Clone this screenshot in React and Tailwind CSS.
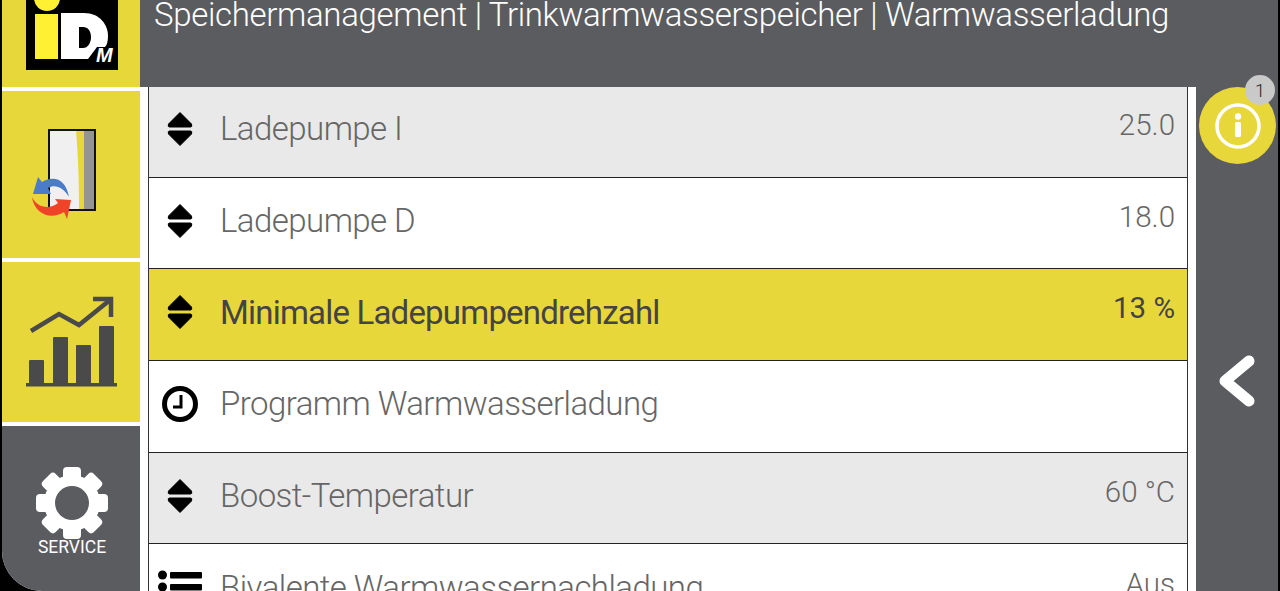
const font = {fontFamily: '"Roboto", "Liberation Sans", sans-serif'}

function SortIcon() {
    return (
        <svg width="26" height="34" viewBox="0 0 26 34" fill="#000">
            <path d="M13 0.5 L24.5 12 Q25.5 15 23.5 15 L2.5 15 Q0.5 15 1.5 12 Z" stroke="#000" strokeLinejoin="round"/>
            <path d="M13 33.5 L24.5 22 Q25.5 19 23.5 19 L2.5 19 Q0.5 19 1.5 22 Z" stroke="#000" strokeLinejoin="round"/>
        </svg>
    )
}

function ClockIcon() {
    return (
        <svg width="38" height="38" viewBox="0 0 38 38" fill="none" stroke="#000">
            <circle cx="19" cy="19" r="15.5" strokeWidth="5"/>
            <path d="M20 10 V22 H12" strokeWidth="3"/>
        </svg>
    )
}

function ListIcon() {
    return (
        <svg width="44" height="36" viewBox="0 0 44 36" fill="#000">
            <circle cx="4.5" cy="6" r="4.5"/>
            <circle cx="4.5" cy="18" r="4.5"/>
            <circle cx="4.5" cy="30" r="4.5"/>
            <rect x="12" y="3" width="32" height="6.5" rx="1"/>
            <rect x="12" y="15" width="32" height="6.5" rx="1"/>
            <rect x="12" y="27" width="32" height="6.5" rx="1"/>
        </svg>
    )
}

function Logo() {
    return (
        <svg width="92" height="71" viewBox="0 0 92 71" className="mx-auto">
            <rect x="0" y="0" width="92" height="70" fill="#000"/>
            <circle cx="21" cy="-2" r="13" fill="#fff033"/>
            <rect x="9" y="14" width="23" height="45" fill="#fff033"/>
            <path fillRule="evenodd" d="M35 13 H58 C74 13 82 25 82 36 C82 41 81 45 79 47 L71 47 L62 59 H35 Z M53 27 V48 H57 C62 48 65 43 65 37 C65 31 62 27 57 27 Z" fill="#fff"/>
            <text x="70" y="62" fontSize="20" fontWeight="700" fontStyle="italic" fill="#fff" style={{fontFamily: '"Liberation Sans", sans-serif'}}>M</text>
        </svg>
    )
}

function TankIcon() {
    return (
        <svg width="84" height="96" viewBox="0 0 84 96" className="ml-[2px] mt-[4px]">
            <rect x="19" y="1" width="46" height="80" fill="#f0f0f0" stroke="#111" strokeWidth="2"/>
            <path d="M46 2 H54 V80 H49 C49 50 48 25 46 2 Z" fill="#e8d73a"/>
            <rect x="54" y="2" width="10" height="78" fill="#949494"/>
            <path d="M3 65 L8 48 L12 53 C24 46 36 50 39 68 C33 58 25 55 18 59 L21 65 Z" fill="#4a7cc8"/>
            <path d="M2 68 C8 80 20 80 28 74 L25 70 L41 71 L37 90 L34 83 C20 92 4 84 2 68 Z" fill="#ee4528"/>
        </svg>
    )
}

function ChartIcon() {
    return (
        <svg width="92" height="92" viewBox="0 0 92 92" fill="#4a4a4a" className="ml-[1px] mb-[1px]">
            <rect x="3" y="64" width="15" height="26" rx="1"/>
            <rect x="27" y="41" width="15" height="49" rx="1"/>
            <rect x="50" y="49" width="15" height="41" rx="1"/>
            <rect x="73" y="30" width="15" height="60" rx="1"/>
            <rect x="0" y="87" width="91" height="3.5"/>
            <path d="M5 35 L33 18 L53 29 L84 4" fill="none" stroke="#4a4a4a" strokeWidth="4.5"/>
            <path d="M67 3 H85 V21" fill="none" stroke="#4a4a4a" strokeWidth="4.5"/>
        </svg>
    )
}

function GearIcon() {
    const angles = [0, 45, 90, 135, 180, 225, 270, 315]
    return (
        <svg width="72" height="72" viewBox="0 0 72 72" fill="#fff">
            {angles.map((a) => (
                <rect key={a} x="27" y="0" width="18" height="20" rx="4" transform={`rotate(${a} 36 36)`}/>
            ))}
            <circle cx="36" cy="36" r="28"/>
            <circle cx="36" cy="36" r="17" fill="#5b5c60"/>
        </svg>
    )
}

function InfoIcon() {
    return (
        <svg width="46" height="46" viewBox="0 0 46 46" fill="#fff">
            <circle cx="23" cy="23" r="21" fill="none" stroke="#fff" strokeWidth="3.5"/>
            <circle cx="23" cy="13.5" r="3.2"/>
            <rect x="20" y="19" width="6" height="15" rx="1.5"/>
        </svg>
    )
}

const rows = [
    {icon: 'sort', label: 'Ladepumpe I', value: '25.0', bg: 'bg-[#e9e9e9]'},
    {icon: 'sort', label: 'Ladepumpe D', value: '18.0', bg: 'bg-white'},
    {icon: 'sort', label: 'Minimale Ladepumpendrehzahl', value: '13 %', bg: 'bg-[#e8d73a]', active: true},
    {icon: 'clock', label: 'Programm Warmwasserladung', value: '', bg: 'bg-white'},
    {icon: 'sort', label: 'Boost-Temperatur', value: '60 °C', bg: 'bg-[#e9e9e9]'},
    {icon: 'list', label: 'Bivalente Warmwassernachladung', value: 'Aus', bg: 'bg-white'},
]

function Row({row}) {
    const labelColor = row.active ? 'text-[#444444] font-normal tracking-[-0.8px]' : 'text-[#666666] font-light tracking-[-0.55px]'
    const valueColor = row.active ? 'text-[#444444] font-normal' : 'text-[#666666] font-light'
    return (
        <div className={`flex h-[91.7px] shrink-0 items-center border-b border-[#222222] pb-[5px] pr-[12px] ${row.bg}`}>
            <div className="mr-[9px] flex w-[62px] shrink-0 justify-center">
                {row.icon === 'sort' && <SortIcon/>}
                {row.icon === 'clock' && <ClockIcon/>}
                {row.icon === 'list' && <ListIcon/>}
            </div>
            <span className={`flex-1 text-[33px] leading-none ${labelColor}`}>{row.label}</span>
            <span className={`mb-[6px] text-[29.5px] leading-none ${valueColor}`}>{row.value}</span>
        </div>
    )
}

export default function App() {
    return (
        <div className="flex h-[591px] w-[1280px] overflow-hidden bg-black" style={font}>
            <aside className="ml-[2px] flex w-[138px] shrink-0 flex-col overflow-hidden rounded-bl-[40px] bg-white">
                <div className="h-[87px] shrink-0 overflow-hidden bg-[#e8d73a] pl-[1px]">
                    <Logo/>
                </div>
                <div className="mt-[4px] flex h-[167px] shrink-0 items-center justify-center bg-[#e8d73a]">
                    <TankIcon/>
                </div>
                <div className="mt-[4px] flex h-[160px] shrink-0 items-center justify-center bg-[#e8d73a]">
                    <ChartIcon/>
                </div>
                <div className="mt-[4px] flex flex-1 flex-col items-center bg-[#5b5c60] pl-[2px] pt-[41px]">
                    <GearIcon/>
                    <span className="text-[17.5px] leading-none text-white">SERVICE</span>
                </div>
            </aside>
            <div className="flex w-[1138px] shrink-0 flex-col bg-[#5b5c60]">
                <header className="h-[87px] shrink-0 pl-[14px]">
                    <h1 className="text-[33px] font-light leading-[30px] tracking-[-0.33px] text-white">
                        Speichermanagement | Trinkwarmwasserspeicher | Warmwasserladung
                    </h1>
                </header>
                <div className="flex min-h-0 flex-1">
                    <div className="w-[1056px] shrink-0 bg-white px-[8px]">
                        <div className="h-full overflow-hidden border-x border-[#333333]">
                            <div className="mt-[-1px]">
                                {rows.map((row) => (
                                    <Row key={row.label} row={row}/>
                                ))}
                            </div>
                        </div>
                    </div>
                    <div className="flex flex-1 flex-col items-center pl-[1px]">
                        <div className="relative flex size-[77px] shrink-0 items-center justify-center rounded-full bg-[#e8d73a]">
                            <InfoIcon/>
                            <span className="absolute right-[1px] top-[-12px] flex size-[30px] items-center justify-center rounded-full bg-[#c9c9c9] text-[18px] font-light text-[#222222]">1</span>
                        </div>
                        <svg width="44" height="62" viewBox="0 0 44 62" className="mt-[186px]" fill="none" stroke="#fff" strokeWidth="11" strokeLinecap="round" strokeLinejoin="round">
                            <path d="M33 11 L9 31 L33 51"/>
                        </svg>
                    </div>
                </div>
            </div>
        </div>
    )
}
